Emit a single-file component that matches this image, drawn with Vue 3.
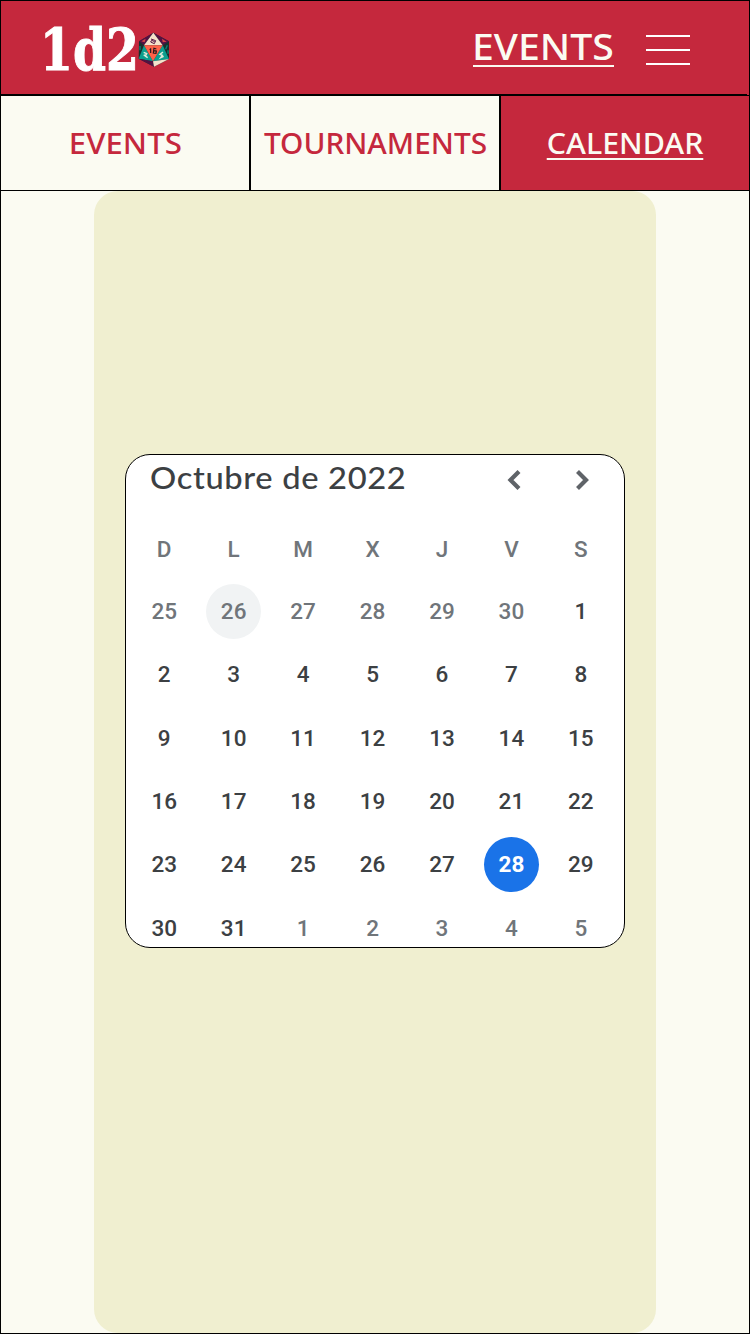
<script setup>
const tabs = [
  { label: 'EVENTS', active: false, stretch: 1.06 },
  { label: 'TOURNAMENTS', active: false, stretch: 1.01 },
  { label: 'CALENDAR', active: true, stretch: 1.03 },
]
const weekdays = ['D', 'L', 'M', 'X', 'J', 'V', 'S']
const days = Array.from({ length: 42 }, (_, i) => {
  const n = i - 5
  const outside = n < 1 || n > 31
  return {
    n: n < 1 ? n + 30 : n > 31 ? n - 31 : n,
    outside,
    today: i === 1,
    selected: !outside && n === 28,
  }
})
</script>

<template>
  <div class="screen">
    <header class="topbar">
      <div class="brand">
        <span class="wordmark"><span class="wordmark-text">1d2</span></span>
        <svg class="die" viewBox="0 0 96 105" width="32" height="35">
          <polygon points="46,2 93,28 93,81 48,104 2,80 3,28" fill="#17302f" />
          <polygon points="46,2 3,28 18,40" fill="#531142" />
          <polygon points="46,2 93,28 74,40" fill="#531142" />
          <polygon points="10,28 23,20 20,31" fill="#d34349" />
          <polygon points="72,20 86,29 74,31" fill="#d34349" />
          <polygon points="46,2 18,40 74,40" fill="#f5e2cb" />
          <polygon points="18,40 2,80 45,88" fill="#0b9e8e" />
          <polygon points="74,40 93,81 45,88" fill="#0b9e8e" />
          <polygon points="18,40 74,40 45,88" fill="#ff6148" />
          <polygon points="2,80 45,88 48,104" fill="#531142" />
          <polygon points="93,81 45,88 48,104" fill="#f5e2cb" />
          <path d="M6 42v13M88 40l-5 12M90 55v10" stroke="#078575" stroke-width="4" />
          <path d="M39 21l14 5-4 9-11-5 3-5 9 4" fill="none" stroke="#531142" stroke-width="3" />
          <path d="M38 49v14M35 53l4-3M46 48l9 3M48 48l-2 15 8 1 1-7-7-1" fill="none" stroke="#26161c" stroke-width="3.5" />
          <path d="M17 61l9 4-4 7 7 5M17 69l8 3M75 60l-9 7 7 3-5 7 9-4" fill="none" stroke="#dfeadb" stroke-width="4.5" />
        </svg>
      </div>
      <span class="page-name"><span>EVENTS</span></span>
      <button class="menu" aria-label="Menu"><i></i><i></i><i></i></button>
    </header>

    <nav class="tabs">
      <a v-for="t in tabs" :key="t.label" class="tab" :class="{ active: t.active }">
        <span :style="{ transform: `scaleX(${t.stretch})` }">{{ t.label }}</span>
      </a>
    </nav>

    <main class="panel">
      <section class="calendar">
        <div class="month">
          <h1>Octubre de 2022</h1>
          <div class="arrows">
            <svg viewBox="0 0 16 22" width="16" height="22"><path d="M13 2.5 4.500 11l8.500 8.500" /></svg>
            <svg viewBox="0 0 16 22" width="16" height="22"><path d="M3.500 2.500 12 11l-8.500 8.500" /></svg>
          </div>
        </div>
        <div class="weekdays">
          <span v-for="w in weekdays" :key="w">{{ w }}</span>
        </div>
        <div class="days">
          <div v-for="(d, i) in days" :key="i" class="cell">
            <span class="day" :class="{ outside: d.outside, today: d.today, selected: d.selected }">{{ d.n }}</span>
          </div>
        </div>
      </section>
    </main>
  </div>
</template>

<style>
body { margin: 0; }
</style>

<style scoped>
* { box-sizing: border-box; }
.screen {
  width: 750px;
  height: 1334px;
  border: 1px solid #000;
  background: #fbfbf2;
  display: flex;
  flex-direction: column;
  overflow: hidden;
  font-family: "Noto Sans", sans-serif;
}
.topbar {
  position: relative;
  height: 95px;
  flex: none;
  background: #c5283d;
  border-bottom: 1px solid #000;
  display: flex;
  align-items: flex-start;
  padding-left: 39px;
}
.topbar::after {
  content: "";
  position: absolute;
  left: 0;
  right: 2px;
  bottom: 0;
  height: 1px;
  background: #000;
}
.brand { display: flex; width: 433px; }
.wordmark {
  width: 98px;
  height: 94px;
  font: bold 57px/98px "DejaVu Serif", serif;
  color: #fff;
  white-space: nowrap;
}
.wordmark-text {
  display: inline-block;
  transform-origin: 0 50%;
  transform: scaleX(0.83);
  -webkit-text-stroke: 1px #fff;
}
.die { margin-top: 31px; }
.page-name {
  font-size: 36px;
  font-weight: 500;
  line-height: 50px;
  margin-top: 21px;
  height: 45px;
  color: #fbfbf2;
  border-bottom: 2px solid #fbfbf2;
  width: 141px;
}
.page-name span {
  display: inline-block;
  transform-origin: 0 50%;
  transform: translateX(-1px) scaleX(1.09);
}
.menu {
  border: 0;
  background: none;
  padding: 0;
  margin: 34px 0 0 32px;
  width: 44px;
  display: flex;
  flex-direction: column;
  gap: 12px;
}
.menu i { height: 2px; background: #fff; }
.tabs {
  height: 95px;
  flex: none;
  display: grid;
  grid-template-columns: 250px 250px 248px;
  border-bottom: 1px solid #000;
}
.tab {
  display: flex;
  justify-content: center;
  align-items: center;
  font-size: 29.5px;
  font-weight: 500;
  color: #c5283d;
  border-right: 2px solid #000;
}
.tab:last-child { border-right: 0; }
.tab.active { background: #c5283d; color: #fbfbf2; }
.tab span { height: 33px; line-height: 31px; }
.tab.active span { border-bottom: 2px solid #fbfbf2; }
.panel {
  width: 562px;
  margin-left: 93px;
  flex: 1;
  background: #f0efd0;
  border-radius: 24px;
  padding: 263px 31px 0;
}
.calendar {
  height: 494px;
  border: 1px solid #000;
  border-radius: 25px;
  background: #fff;
  overflow: hidden;
  font-family: Roboto, sans-serif;
  font-weight: 500;
  font-size: 22.500px;
  color: #3c4043;
  padding: 0 8px 0 3.5px;
}
.month {
  display: flex;
  justify-content: space-between;
  height: 64px;
  padding: 0 26.5px 0 20.5px;
}
h1 {
  margin: 0;
  font: 500 31px/45px Lato, sans-serif;
  letter-spacing: 0.6px;
  white-space: nowrap;
  transform-origin: 0 50%;
  transform: scaleX(1.055);
}
.arrows { display: flex; gap: 52px; padding-top: 14px; }
.arrows path { fill: none; stroke: #5f6368; stroke-width: 4.2; }
.weekdays, .days { display: grid; grid-template-columns: repeat(7, 69.45px); text-align: center; }
.weekdays { height: 60.700px; line-height: 60px; color: #70757a; }
.days { grid-auto-rows: 63.4px; }
.cell { display: flex; align-items: center; justify-content: center; }
.day {
  width: 55px;
  height: 55px;
  border-radius: 50%;
  line-height: 54px;
}
.outside { color: #70757a; }
.today { background: #f1f3f4; }
.selected { background: #1a73e8; color: #fff; font-weight: 700; }
</style>
